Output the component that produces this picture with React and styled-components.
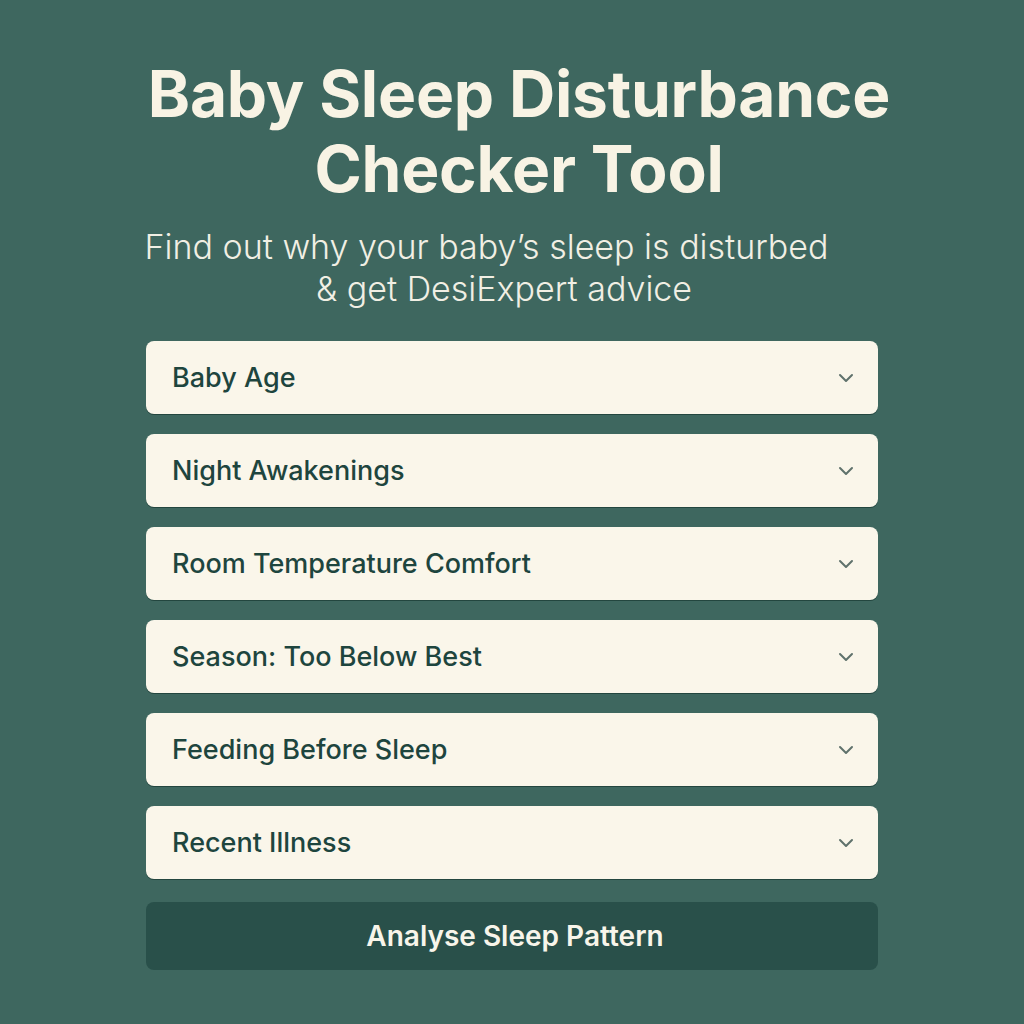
import styled, { createGlobalStyle } from "styled-components";

const GlobalStyle = createGlobalStyle`
  html, body {
    margin: 0;
    padding: 0;
    background: #3e675f;
  }
  body {
    font-family: Inter, "Noto Sans", sans-serif;
  }
`;

const fields = [
  "Baby Age",
  "Night Awakenings",
  "Room Temperature Comfort",
  "Season: Too Below Best",
  "Feeding Before Sleep",
  "Recent Illness",
];

const Chevron = () => (
  <svg width="16" height="10" viewBox="0 0 16 10" fill="none">
    <path d="M2 2l6 6 6-6" stroke="#5f726c" strokeWidth="2" strokeLinecap="round" strokeLinejoin="round" />
  </svg>
);

export default function App() {
  return (
    <>
      <GlobalStyle />
      <Page>
        <Title>Baby Sleep Disturbance<br />Checker Tool</Title>
        <Subtitle>
          <SubLine $shift={51}>Find out why your baby’s sleep is disturbed</SubLine>
          <SubLine $shift={16}>&amp; get DesiExpert advice</SubLine>
        </Subtitle>
        <Form>
          {fields.map((f) => (
            <Field key={f}>
              <span>{f}</span>
              <Chevron />
            </Field>
          ))}
          <Button>Analyse Sleep Pattern</Button>
        </Form>
      </Page>
    </>
  );
}

const Page = styled.div`
  width: 1024px;
  height: 1024px;
  box-sizing: border-box;
  padding-top: 56px;
  display: flex;
  flex-direction: column;
  align-items: center;
  background: #3e675f;
`;

const Title = styled.h1`
  margin: 0 0 0 14px;
  font-size: 64px;
  line-height: 75px;
  font-weight: 700;
  color: #f8f3e4;
  text-align: center;
  letter-spacing: -0.2px;
`;

const Subtitle = styled.div`
  margin-top: 20px;
  width: 100%;
  display: flex;
  flex-direction: column;
  align-items: center;
`;

const SubLine = styled.span`
  margin-right: ${(p) => p.$shift}px;
  font-size: 34px;
  line-height: 42px;
  font-weight: 300;
  color: #f1efe4;
  white-space: nowrap;
`;

const Form = styled.div`
  margin-top: 31px;
  width: 732px;
  display: flex;
  flex-direction: column;
  gap: 20px;
`;

const Field = styled.div`
  height: 73px;
  box-sizing: border-box;
  padding: 0 24px 0 26px;
  display: flex;
  align-items: center;
  justify-content: space-between;
  background: #faf6ea;
  border-radius: 8px;
  box-shadow: 0 1px 0 #23463f;
  font-size: 27px;
  font-weight: 500;
  color: #1e453e;
`;

const Button = styled.div`
  margin-top: 3px;
  height: 68px;
  display: flex;
  align-items: center;
  justify-content: center;
  background: #29504a;
  border-radius: 8px;
  font-size: 28px;
  font-weight: 600;
  color: #f8f5ea;
  padding-left: 6px;
`;
